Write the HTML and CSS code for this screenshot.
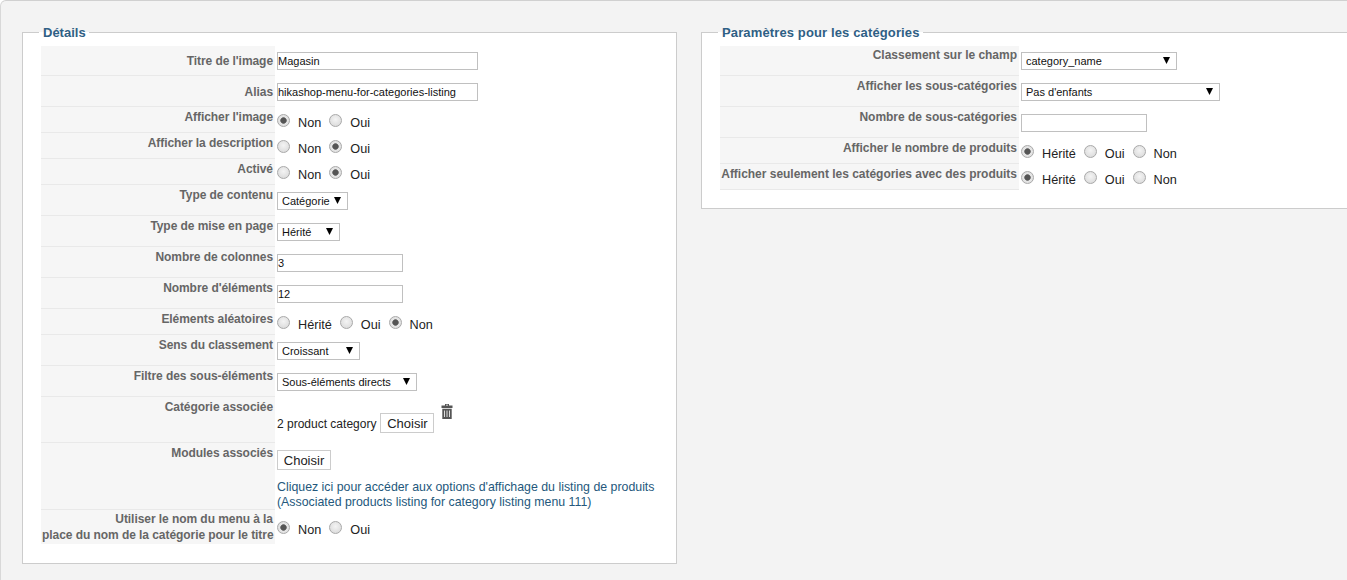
FILE: index.html
```html
<!DOCTYPE html>
<html lang="fr">
<head>
<meta charset="utf-8">
<title>Paramètres du menu</title>
<link rel="stylesheet" href="styles.css">
</head>
<body>
<main class="page">
  <fieldset class="panel panel-details">
    <legend>Détails</legend>
    <table class="form col-details">
      <tr class="r30 mid"><td class="key">Titre de l'image</td><td class="value"><input class="w201" type="text" value="Magasin"></td></tr>
      <tr class="r31 mid"><td class="key">Alias</td><td class="value"><input class="w201" type="text" value="hikashop-menu-for-categories-listing"></td></tr>
      <tr class="r26"><td class="key">Afficher l'image</td><td class="value"><div class="radios"><input type="radio" name="a" checked><span>Non</span><input type="radio" name="a"><span>Oui</span></div></td></tr>
      <tr class="r26"><td class="key">Afficher la description</td><td class="value"><div class="radios"><input type="radio" name="b"><span>Non</span><input type="radio" name="b" checked><span>Oui</span></div></td></tr>
      <tr class="r26"><td class="key">Activé</td><td class="value"><div class="radios"><input type="radio" name="c"><span>Non</span><input type="radio" name="c" checked><span>Oui</span></div></td></tr>
      <tr class="r31"><td class="key">Type de contenu</td><td class="value"><select class="w71"><option>Catégorie</option></select></td></tr>
      <tr class="r31"><td class="key">Type de mise en page</td><td class="value"><select class="w63"><option>Hérité</option></select></td></tr>
      <tr class="r31"><td class="key">Nombre de colonnes</td><td class="value"><input class="w126" type="text" value="3"></td></tr>
      <tr class="r31"><td class="key">Nombre d'éléments</td><td class="value"><input class="w126" type="text" value="12"></td></tr>
      <tr class="r26"><td class="key">Eléments aléatoires</td><td class="value"><div class="radios"><input type="radio" name="d"><span>Hérité</span><input type="radio" name="d"><span>Oui</span><input type="radio" name="d" checked><span>Non</span></div></td></tr>
      <tr class="r31"><td class="key">Sens du classement</td><td class="value"><select class="w83"><option>Croissant</option></select></td></tr>
      <tr class="r31"><td class="key">Filtre des sous-éléments</td><td class="value"><select class="w140"><option>Sous-éléments directs</option></select></td></tr>
      <tr class="r46"><td class="key">Catégorie associée</td><td class="value">
        <div class="picker">
          <span class="picked">2 product category</span>
          <button class="btn" type="button">Choisir</button>
          <svg class="trash" width="12" height="15" viewBox="0 0 12 15" aria-hidden="true"><path fill="#555" d="M4 0h4v1.5h3.5V4H.5V1.5H4zM5 .8v.8h2V.8zM1.3 4.8h9.4V15H1.3z"/><path fill="#ddd" d="M3 6.5h1V13H3zM5.5 6.5h1V13h-1zM8 6.5h1V13H8z"/></svg>
        </div>
      </td></tr>
      <tr class="r67"><td class="key">Modules associés</td><td class="value">
        <button class="btn" type="button">Choisir</button>
        <a class="link" href="#">Cliquez ici pour accéder aux options d'affichage du listing de produits<br>(Associated products listing for category listing menu 111)</a>
      </td></tr>
      <tr class="r34 last"><td class="key">Utiliser le nom du menu à la<br>place du nom de la catégorie pour le titre</td><td class="value"><div class="radios"><input type="radio" name="e" checked><span>Non</span><input type="radio" name="e"><span>Oui</span></div></td></tr>
    </table>
  </fieldset>
  <fieldset class="panel panel-params">
    <legend>Paramètres pour les catégories</legend>
    <table class="form col-params">
      <tr class="r30"><td class="key">Classement sur le champ</td><td class="value"><select class="w156"><option>category_name</option></select></td></tr>
      <tr class="r31"><td class="key">Afficher les sous-catégories</td><td class="value"><select class="w199"><option>Pas d'enfants</option></select></td></tr>
      <tr class="r31"><td class="key">Nombre de sous-catégories</td><td class="value"><input class="w126" type="text" value=""></td></tr>
      <tr class="r26"><td class="key">Afficher le nombre de produits</td><td class="value"><div class="radios"><input type="radio" name="f" checked><span>Hérité</span><input type="radio" name="f"><span>Oui</span><input type="radio" name="f"><span>Non</span></div></td></tr>
      <tr class="r26"><td class="key">Afficher seulement les catégories avec des produits</td><td class="value"><div class="radios"><input type="radio" name="g" checked><span>Hérité</span><input type="radio" name="g"><span>Oui</span><input type="radio" name="g"><span>Non</span></div></td></tr>
    </table>
  </fieldset>
</main>
</body>
</html>
```

FILE: styles.css
```css
html, body {
  margin: 0;
  height: 580px;
  overflow: hidden;
  background: #fff;
  font-family: "Liberation Sans", Arial, sans-serif;
  font-size: 12px;
  color: #222;
}
.page {
  box-sizing: border-box;
  display: flex;
  align-items: flex-start;
  gap: 24px;
  height: 580px;
  width: 1347px;
  overflow: hidden;
  padding: 24px 0 0 22px;
  background: #f3f3f3;
  border-top: 1px solid #d0d0d0;
  border-left: 1px solid #d8d8d8;
  border-top-left-radius: 6px;
}
.panel {
  flex: none;
  min-width: 0;
  margin: -1px 0 0 -1px;
  padding: 6px 18px 19px;
  background: #fff;
  border: 1px solid #ccc;
  box-sizing: border-box;
}
.panel-details { width: 655px; }
.panel-params { width: 760px; margin-left: 0; padding-bottom: 18px; }
legend {
  margin-left: -2px;
  padding: 1px 3px 0 4px;
  font-size: 13px;
  font-weight: bold;
  line-height: 15px;
  letter-spacing: 0.13px;
  color: #2f6085;
}
.panel-details legend { letter-spacing: 0; }
.form {
  border-collapse: separate;
  border-spacing: 0;
  table-layout: fixed;
}
.col-details { width: 615px; }
.col-params { width: 620px; }
.form td {
  box-sizing: border-box;
  padding: 0;
  vertical-align: top;
}
.col-details .key { width: 234px; }
.col-params .key { width: 299px; letter-spacing: -0.02px; }
.form .key {
  padding: 2px 2px 0 1px;
  background: #f6f6f6;
  border-bottom: 1px solid #e9e9e9;
  text-align: right;
  white-space: nowrap;
  font-weight: bold;
  line-height: 16px;
  color: #666;
}
.col-details .key { letter-spacing: -0.06px; }
.form .last .key { border-bottom: 0; padding-top: 1px; }
.form .mid .key { vertical-align: middle; padding-top: 1px; }
.form tr:first-child .key { padding-top: 1px; }
.form .value { padding: 7px 0 0 2px; }
.form tr:first-child .value { padding-top: 6px; }
.form .last .value { padding-top: 11px; }
.r26 td { height: 26px; }
.r30 td { height: 30px; }
.r31 td { height: 31px; }
.r34 td { height: 34px; }
.r46 td { height: 46px; }
.r67 td { height: 67px; }

input[type="text"], select {
  box-sizing: border-box;
  display: block;
  height: 18px;
  margin: 0;
  border: 1px solid #c0c0c0;
  border-radius: 0;
  background-color: #fff;
  font-family: "Liberation Sans", Arial, sans-serif;
  font-size: 11px;
  color: #111;
}
input[type="text"] { padding: 0; }
select {
  appearance: none;
  padding: 0 0 0 4px;
  background-image: url("data:image/svg+xml,%3Csvg xmlns='http://www.w3.org/2000/svg' width='7' height='7'%3E%3Cpath d='M0 0h7L3.5 7z'/%3E%3C/svg%3E");
  background-repeat: no-repeat;
  background-position: right 6px top 4px;
}
.w63 { width: 63px; }
.w71 { width: 71px; }
.w83 { width: 83px; }
.w126 { width: 126px; }
.w140 { width: 140px; }
.w156 { width: 156px; }
.w199 { width: 199px; }
.w201 { width: 201px; }

.radios {
  display: flex;
  align-items: flex-start;
  gap: 8px;
  font-size: 12.7px;
  line-height: 16px;
}
.radios span { margin-top: 1px; }
input[type="radio"] {
  appearance: none;
  box-sizing: border-box;
  flex: none;
  width: 13px;
  height: 13px;
  margin: 0;
  border: 1px solid #a9a9a9;
  border-radius: 50%;
  background: radial-gradient(circle at 50% 40%, #f4f4f4, #d6d6d6);
}
input[type="radio"]:checked {
  background: radial-gradient(circle, #555 0 2.5px, #7d7d7d 3px, #e6e6e6 3.6px, #dcdcdc);
}
.btn {
  box-sizing: border-box;
  display: block;
  width: 54px;
  height: 20px;
  padding: 0;
  border: 1px solid #ccc;
  background: #fff;
  font-family: "Liberation Sans", Arial, sans-serif;
  font-size: 13px;
  color: #222;
}
.picker {
  display: flex;
  align-items: flex-start;
}
.picked { margin-top: 12px; line-height: 16px; }
.picker .btn { margin: 9px 0 0 4px; }
.trash { margin-left: 7px; }
.link {
  display: block;
  margin-top: 10px;
  font-size: 12.35px;
  line-height: 15px;
  color: #24587c;
  text-decoration: none;
}
```
